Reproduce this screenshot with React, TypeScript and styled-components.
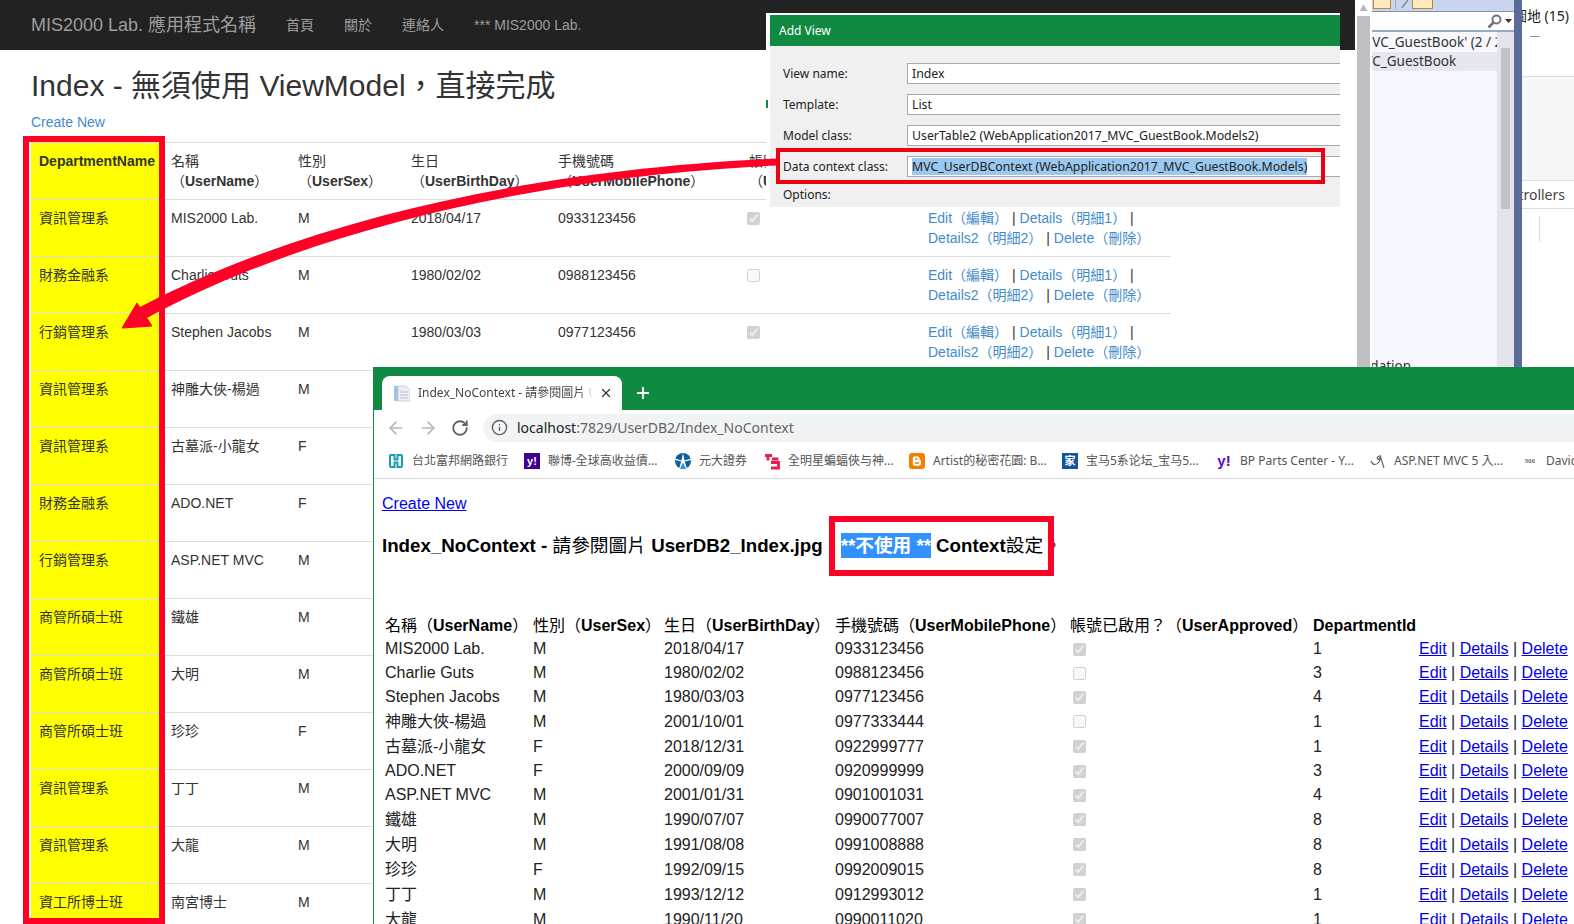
// App.tsx
import React from 'react';
import styled, { createGlobalStyle } from 'styled-components';
import { ArrowLeft, ArrowRight, Info, Plus, RotateCw, X } from 'lucide-react';

const SANS = '"Liberation Sans", "Noto Sans CJK TC", sans-serif';
const UI = '"Noto Sans", "Noto Sans CJK TC", sans-serif';
const GREEN = '#118a41';
const MARK = '#ff0027';

const Global = createGlobalStyle`
    html, body {
        margin: 0;
        padding: 0;
        background: #fff;
    }
    body {
        width: 1574px;
        height: 924px;
        overflow: hidden;
        font-family: ${SANS};
    }
`;

const Page = styled.div`
    position: relative;
    width: 1574px;
    height: 924px;
    overflow: hidden;
    background: #fff;
    color: #333;
    font-size: 14px;
    line-height: 20px;
`;

const Navbar = styled.nav`
    display: flex;
    align-items: center;
    gap: 30px;
    height: 50px;
    width: 1355px;
    padding-left: 31px;
    box-sizing: border-box;
    background: #222;
    color: #9d9d9d;
`;

const Brand = styled.div`
    width: 225px;
    font-size: 18px;
    white-space: nowrap;
`;

const Main = styled.main`
    padding-left: 31px;
`;

const Title = styled.h2`
    margin: 19px 0 10px;
    font-size: 30px;
    line-height: 33px;
    font-weight: 400;
    color: #333;
`;

const Link = styled.a`
    color: #428bca;
`;

const Table = styled.table`
    margin-top: 10px;
    width: 1140px;
    table-layout: fixed;
    border-collapse: collapse;
`;

const Col = styled.col<{ $w: number }>`
    width: ${p => p.$w}px;
`;

const Cell = styled.td<{ $dept?: boolean }>`
    height: 40px;
    padding: 8px;
    vertical-align: top;
    border-top: 1px solid #ddd;
    white-space: nowrap;
    background: ${p => (p.$dept ? '#ff0' : 'transparent')};
`;

const HeadCell = styled(Cell).attrs({ as: 'th' })`
    text-align: left;
    font-weight: 400;
`;

const Latin = styled.b`
    font-weight: 700;
`;

const Check = styled.input.attrs({ type: 'checkbox', disabled: true })`
    display: block;
    margin: 4px 0 0 -2px;
    width: 13px;
    height: 13px;
`;

const RedFrame = styled.div<{ $x: number; $y: number; $w: number; $h: number; $b: number; $c: string }>`
    position: absolute;
    left: ${p => p.$x}px;
    top: ${p => p.$y}px;
    width: ${p => p.$w}px;
    height: ${p => p.$h}px;
    box-sizing: border-box;
    border: ${p => p.$b}px solid ${p => p.$c};
    pointer-events: none;
`;

const ArrowLayer = styled.svg`
    position: absolute;
    left: 0;
    top: 0;
    pointer-events: none;
`;

/* Add View dialog */
const Dialog = styled.section`
    position: absolute;
    left: 766px;
    top: 13px;
    width: 574px;
    height: 194px;
    box-sizing: border-box;
    padding: 2px 0 0 4px;
    background: #fff;
    overflow: hidden;
    font-family: ${UI};
    font-size: 12px;
    color: #222;
`;

const GreenSliver = styled.div`
    position: absolute;
    left: 0;
    top: 87px;
    width: 2px;
    height: 8px;
    background: ${GREEN};
`;

const DialogTitle = styled.div`
    height: 31px;
    line-height: 31px;
    padding-left: 9px;
    background: ${GREEN};
    color: #fff;
`;

const DialogBody = styled.div`
    display: flex;
    flex-direction: column;
    gap: 10px;
    height: 161px;
    box-sizing: border-box;
    padding: 17px 0 0 13px;
    background: #f0f0f0;
`;

const FieldRow = styled.div`
    display: grid;
    grid-template-columns: 124px 1fr;
    align-items: center;
    height: 21px;
    margin-right: -8px;
`;

const FieldBox = styled.div`
    height: 21px;
    box-sizing: border-box;
    padding-left: 4px;
    font-size: 12.3px;
    line-height: 19px;
    background: #fff;
    border: 1px solid #a9a9a9;
    white-space: nowrap;
`;

const Selected = styled.span`
    background: #9ac8ee;
`;

const OptionsLabel = styled.span`
    margin-top: -2px;
`;

/* Visual Studio side panes */
const VsShell = styled.aside`
    position: absolute;
    left: 1355px;
    top: 0;
    width: 219px;
    height: 380px;
    display: flex;
    background: #fff;
    font-family: ${UI};
`;

const OuterScroll = styled.div`
    width: 17px;
    flex-shrink: 0;
    box-sizing: border-box;
    padding: 0 2px;
    display: flex;
    flex-direction: column;
    align-items: stretch;
`;

const ScrollUp = styled.div`
    height: 16px;
    display: flex;
    align-items: center;
    justify-content: center;
    color: #b5b6bb;
    font-size: 8px;
    line-height: 16px;
`;

const OuterThumb = styled.div`
    flex: 1;
    background: #bfc0c4;
`;

const Explorer = styled.div`
    width: 142px;
    flex-shrink: 0;
    display: flex;
    flex-direction: column;
    background: #f6f8fe;
    color: #333;
    font-size: 13.5px;
`;

const VsToolbar = styled.div`
    display: flex;
    align-items: flex-start;
    height: 11px;
    background: #ccd5ee;
`;

const ToolBox = styled.div<{ $w: number }>`
    width: ${p => p.$w}px;
    height: 9px;
    box-sizing: border-box;
    margin-left: 1px;
    background: #ffe9bd;
    border: 1px solid #b08a35;
    border-top: 0;
`;

const ToolSep = styled.div`
    width: 1px;
    height: 9px;
    margin: 0 5px 0 4px;
    background: #9aa6c4;
`;

const SearchRow = styled.div`
    display: flex;
    align-items: center;
    justify-content: flex-end;
    height: 21px;
    box-sizing: border-box;
    padding-right: 2px;
    gap: 3px;
    background: #fff;
    border-top: 1px solid #7f8fb5;
    border-bottom: 2px solid #9aa8c8;
`;

const ExplorerBody = styled.div`
    flex: 1;
    display: flex;
    min-height: 0;
`;

const ExplorerList = styled.div`
    flex: 1;
    min-width: 0;
    overflow: hidden;
    display: flex;
    flex-direction: column;
    padding-top: 1px;
`;

const ExplorerRow = styled.div<{ $active?: boolean; $indent: number }>`
    height: 19px;
    line-height: 19px;
    white-space: nowrap;
    text-indent: ${p => p.$indent}px;
    background: ${p => (p.$active ? '#e6e7ef' : 'transparent')};
`;

const ExplorerFoot = styled(ExplorerRow)`
    margin-top: auto;
    margin-bottom: 4px;
`;

const InnerScroll = styled.div`
    width: 17px;
    flex-shrink: 0;
    box-sizing: border-box;
    padding: 0 4px;
    background: #e4e5ec;
`;

const InnerThumb = styled.div`
    margin-top: 16px;
    height: 161px;
    background: #c2c3c9;
`;

const Strip = styled.div`
    width: 8px;
    flex-shrink: 0;
    background: #5b6a99;
`;

const PropsPane = styled.div`
    flex: 1;
    min-width: 0;
    display: flex;
    flex-direction: column;
    overflow: hidden;
    font-size: 14px;
    color: #444;
`;

const PropsHead = styled.div`
    height: 77px;
    box-sizing: border-box;
    border-bottom: 1px solid #ddd;
    display: flex;
    flex-direction: column;
    align-items: flex-end;
`;

const PropsCount = styled.div`
    height: 31px;
    line-height: 31px;
    padding-right: 5px;
    white-space: nowrap;
    color: #222;
`;

const Dash = styled.div`
    align-self: flex-start;
    margin: 5px 0 0 8px;
    width: 10px;
    height: 1px;
    background: #999;
`;

const PropsGrey = styled.div`
    height: 103px;
    background: #f7f7f7;
`;

const PropsTab = styled.div`
    height: 29px;
    line-height: 27px;
    box-sizing: border-box;
    display: flex;
    justify-content: flex-end;
    padding-right: 9px;
    white-space: nowrap;
    border-top: 1px solid #ddd;
    border-bottom: 1px solid #ddd;
`;

const PropsTick = styled.div`
    margin: 7px 0 0 17px;
    width: 1px;
    height: 26px;
    background: #ddd;
`;

/* Browser window */
const Browser = styled.section`
    position: absolute;
    left: 373px;
    top: 367px;
    right: 0;
    bottom: 0;
    display: flex;
    flex-direction: column;
    overflow: hidden;
    background: #fff;
    border-left: 1px solid ${GREEN};
    color: #000;
`;

const TabStrip = styled.div`
    display: flex;
    align-items: flex-end;
    height: 43px;
    flex-shrink: 0;
    padding-left: 8px;
    background: ${GREEN};
`;

const Tab = styled.div`
    display: flex;
    align-items: center;
    width: 240px;
    height: 34px;
    box-sizing: border-box;
    padding: 0 9px 0 12px;
    background: #fff;
    border-radius: 8px 8px 0 0;
    font-family: ${UI};
    font-size: 12px;
    color: #444;
`;

const TabLabel = styled.div`
    flex: 1;
    margin: 0 5px 0 8px;
    overflow: hidden;
    white-space: nowrap;
    -webkit-mask-image: linear-gradient(90deg, #000 92%, transparent);
`;

const NewTab = styled.div`
    display: flex;
    margin: 0 0 8px 12px;
    color: #fff;
`;

const Toolbar = styled.div`
    display: flex;
    align-items: center;
    height: 35px;
    flex-shrink: 0;
    padding-left: 6px;
    color: #b4b7bb;
`;

const NavIcon = styled.div<{ $dark?: boolean }>`
    display: flex;
    justify-content: center;
    width: 32px;
    color: ${p => (p.$dark ? '#5f6368' : '#b4b7bb')};
`;

const UrlBar = styled.div`
    flex: 1;
    display: flex;
    align-items: center;
    gap: 9px;
    height: 28px;
    margin-left: 7px;
    padding-left: 8px;
    background: #f1f3f4;
    border-radius: 14px 0 0 14px;
    color: #5f6368;
    font-family: ${UI};
    font-size: 14px;
`;

const Host = styled.span`
    color: #202124;
`;

const Bookmarks = styled.div`
    display: flex;
    align-items: center;
    height: 34px;
    flex-shrink: 0;
    box-sizing: border-box;
    padding: 0 0 1px 14px;
    border-bottom: 1px solid #d9dadc;
    font-family: ${UI};
    font-size: 12px;
    color: #555;
`;

const Bookmark = styled.div<{ $w: number }>`
    display: flex;
    align-items: center;
    gap: 8px;
    width: ${p => p.$w}px;
    flex-shrink: 0;
    white-space: nowrap;
`;

const FavBox = styled.span<{ $bg?: string; $color?: string; $size?: number }>`
    display: flex;
    align-items: center;
    justify-content: center;
    width: 16px;
    height: 16px;
    flex-shrink: 0;
    overflow: hidden;
    background: ${p => p.$bg ?? 'transparent'};
    color: ${p => p.$color ?? '#fff'};
    font-family: ${SANS};
    font-size: ${p => p.$size ?? 11}px;
    font-weight: 700;
    line-height: 16px;
`;

const BrowserBody = styled.div`
    padding: 16px 0 0 8px;
    font-size: 16px;
    line-height: 18px;
`;

const PlainLink = styled.a`
    color: #0000ee;
    text-decoration: underline;
`;

const Heading = styled.h3`
    display: flex;
    align-items: center;
    height: 25px;
    margin: 20px 0 57px;
    font-size: 18.72px;
    font-weight: 700;
    white-space: pre;
`;

const Light = styled.span`
    font-weight: 400;
`;

const Highlight = styled.span`
    display: inline-block;
    margin: 0 5px 0 18px;
    height: 25px;
    line-height: 25px;
    background: #3390ff;
    color: #fff;
`;

const UserTable = styled.table`
    margin-left: 1px;
    width: 1210px;
    table-layout: fixed;
    border-collapse: collapse;
`;

const UserHead = styled.th`
    height: 22px;
    padding: 0 2px;
    text-align: left;
    font-weight: 400;
    white-space: nowrap;
`;

const UserRow = styled.tr<{ $cjk: boolean }>`
    height: ${p => (p.$cjk ? 25 : 24)}px;
`;

const UserCell = styled.td`
    padding: 0 2px;
    white-space: nowrap;
    color: #222;
`;

const UserCheck = styled.input.attrs({ type: 'checkbox', disabled: true })`
    display: block;
    margin: 0 0 0 3px;
    width: 13px;
    height: 13px;
`;

type User = {
    dept: string;
    name: string;
    sex: string;
    birth: string;
    phone: string;
    ok: boolean;
    id: number;
    cjk: boolean;
};

const users: User[] = [
    { dept: '資訊管理系', name: 'MIS2000 Lab.', sex: 'M', birth: '2018/04/17', phone: '0933123456', ok: true, id: 1, cjk: false },
    { dept: '財務金融系', name: 'Charlie Guts', sex: 'M', birth: '1980/02/02', phone: '0988123456', ok: false, id: 3, cjk: false },
    { dept: '行銷管理系', name: 'Stephen Jacobs', sex: 'M', birth: '1980/03/03', phone: '0977123456', ok: true, id: 4, cjk: false },
    { dept: '資訊管理系', name: '神雕大俠-楊過', sex: 'M', birth: '2001/10/01', phone: '0977333444', ok: false, id: 1, cjk: true },
    { dept: '資訊管理系', name: '古墓派-小龍女', sex: 'F', birth: '2018/12/31', phone: '0922999777', ok: true, id: 1, cjk: true },
    { dept: '財務金融系', name: 'ADO.NET', sex: 'F', birth: '2000/09/09', phone: '0920999999', ok: true, id: 3, cjk: false },
    { dept: '行銷管理系', name: 'ASP.NET MVC', sex: 'M', birth: '2001/01/31', phone: '0901001031', ok: true, id: 4, cjk: false },
    { dept: '商管所碩士班', name: '鐵雄', sex: 'M', birth: '1990/07/07', phone: '0990077007', ok: true, id: 8, cjk: true },
    { dept: '商管所碩士班', name: '大明', sex: 'M', birth: '1991/08/08', phone: '0991008888', ok: true, id: 8, cjk: true },
    { dept: '商管所碩士班', name: '珍珍', sex: 'F', birth: '1992/09/15', phone: '0992009015', ok: true, id: 8, cjk: true },
    { dept: '資訊管理系', name: '丁丁', sex: 'M', birth: '1993/12/12', phone: '0912993012', ok: true, id: 1, cjk: true },
    { dept: '資訊管理系', name: '大龍', sex: 'M', birth: '1990/11/20', phone: '0990011020', ok: true, id: 1, cjk: true },
];

const FubonIcon = () => (
    <svg width="16" height="16" viewBox="0 0 16 16" fill="none" stroke="#17a0ad" strokeWidth="2">
        <path d="M6.500 2H3Q2 2 2 3V13Q2 14 3 14H6.500V9.500H9.500V14H13Q14 14 14 13V3Q14 2 13 2H9.500V6.500H6.500Z" />
    </svg>
);

const YuantaIcon = () => (
    <svg width="16" height="16" viewBox="0 0 16 16">
        <circle cx="8" cy="8" r="8" fill="#0f5f9e" />
        <path d="M0 5.500 6.500 7.500 8 0 9.500 7.500 16 5.500V7L9.800 8.600 12 16H4L6.200 8.600 0 7z" fill="#fff" />
        <path d="M8 9.500 11 16H5z" fill="#2c93d6" />
    </svg>
);

const StarIcon = () => (
    <svg width="16" height="17" viewBox="0 0 16 17" fill="none" stroke="#ee1c4e" strokeWidth="2.800">
        <path d="M1 2.500H8M4 1V7.500M8 6H14.500M7 9.500H14.500V15H7" />
    </svg>
);

const BloggerIcon = () => (
    <svg width="16" height="16" viewBox="0 0 16 16">
        <rect width="16" height="16" rx="3" fill="#f57d00" />
        <path d="M5.200 3.500H8.500A2.200 2.200 0 0 1 10.700 5.700V6.300A1 1 0 0 0 11.700 7.300A1 1 0 0 1 12 8V10.500A2.200 2.200 0 0 1 9.800 12.700H6A2.200 2.200 0 0 1 3.800 10.500V5A1.500 1.500 0 0 1 5.200 3.500Z" fill="#fff" />
        <path d="M6 6H8.500M6 10H10" stroke="#f57d00" strokeWidth="1.300" />
    </svg>
);

const SpiralIcon = () => (
    <svg width="16" height="16" viewBox="0 0 16 16" fill="none" stroke="#666" strokeWidth="1.200">
        <path d="M1 8C3 13 7 12 9 9 11 6 9 2 7.500 4 6 6 9 7 11 6M10 2 14 15" />
    </svg>
);

const TabDocIcon = () => (
    <svg width="16" height="17" viewBox="0 0 16 17">
        <rect x="0" y="1" width="4" height="15" fill="#9cc4e4" />
        <path d="M4 1H12L16 5V16H4Z" fill="#eceff3" stroke="#c4c8cf" strokeWidth="0.800" />
        <path d="M6 7H14M6 10H14M6 13H14" stroke="#b8bec6" strokeWidth="1" />
    </svg>
);

const SearchIcon = () => (
    <svg width="15" height="15" viewBox="0 0 15 15" fill="none" stroke="#71747c" strokeWidth="2">
        <circle cx="9.500" cy="5.500" r="4" />
        <path d="M6.500 8.500 1.500 13.500" strokeWidth="2.600" />
    </svg>
);

const PencilIcon = () => (
    <svg width="10" height="9" viewBox="0 0 10 9" fill="none" stroke="#7f8794" strokeWidth="1.400">
        <path d="M1 8 3 5 7 0" />
    </svg>
);

const bookmarks: { w: number; label: string; icon: React.ReactNode }[] = [
    { w: 136, label: '台北富邦網路銀行', icon: <FubonIcon /> },
    { w: 151, label: '聯博-全球高收益債...', icon: <FavBox $bg="#400090">y!</FavBox> },
    { w: 89, label: '元大證券', icon: <YuantaIcon /> },
    { w: 145, label: '全明星蝙蝠俠与神...', icon: <StarIcon /> },
    { w: 153, label: 'Artist的秘密花園: B...', icon: <BloggerIcon /> },
    { w: 154, label: '宝马5系论坛_宝马5...', icon: <FavBox $bg="#14549c">家</FavBox> },
    { w: 154, label: 'BP Parts Center - Y...', icon: <FavBox $color="#5f01d1" $size={15}>y!</FavBox> },
    { w: 152, label: 'ASP.NET MVC 5 入...', icon: <SpiralIcon /> },
    { w: 60, label: 'David', icon: <FavBox $color="#666" $size={6}>500</FavBox> },
];

const App: React.FC = () => {
    return (
        <Page lang="zh-Hant">
            <Global />
            <Navbar>
                <Brand>MIS2000 Lab. 應用程式名稱</Brand>
                <span>首頁</span>
                <span>關於</span>
                <span>連絡人</span>
                <span>*** MIS2000 Lab.</span>
            </Navbar>

            <Main>
                <Title>Index - 無須使用 ViewModel，直接完成</Title>
                <Link>Create New</Link>
                <Table>
                    <colgroup>
                        <Col $w={132} />
                        <Col $w={127} />
                        <Col $w={113} />
                        <Col $w={147} />
                        <Col $w={191} />
                        <Col $w={179} />
                        <Col $w={251} />
                    </colgroup>
                    <thead>
                        <tr>
                            <HeadCell $dept><Latin>DepartmentName</Latin></HeadCell>
                            <HeadCell>名稱<br />（<Latin>UserName</Latin>）</HeadCell>
                            <HeadCell>性別<br />（<Latin>UserSex</Latin>）</HeadCell>
                            <HeadCell>生日<br />（<Latin>UserBirthDay</Latin>）</HeadCell>
                            <HeadCell>手機號碼<br />（<Latin>UserMobilePhone</Latin>）</HeadCell>
                            <HeadCell>帳號已啟用？<br />（<Latin>UserApproved</Latin>）</HeadCell>
                            <HeadCell />
                        </tr>
                    </thead>
                    <tbody>
                        {users.map((u, i) => (
                            <tr key={i}>
                                <Cell $dept>{u.dept}</Cell>
                                <Cell>{u.name}</Cell>
                                <Cell>{u.sex}</Cell>
                                <Cell>{u.birth}</Cell>
                                <Cell>{u.phone}</Cell>
                                <Cell><Check defaultChecked={u.ok} /></Cell>
                                <Cell>
                                    <Link>Edit（編輯）</Link> | <Link>Details（明細1）</Link> |<br />
                                    <Link>Details2（明細2）</Link> | <Link>Delete（刪除）</Link>
                                </Cell>
                            </tr>
                        ))}
                        <tr>
                            <Cell $dept>資工所博士班</Cell>
                            <Cell>南宮博士</Cell>
                            <Cell>M</Cell>
                        </tr>
                    </tbody>
                </Table>
            </Main>

            <VsShell>
                <OuterScroll>
                    <ScrollUp>▲</ScrollUp>
                    <OuterThumb />
                </OuterScroll>
                <Explorer>
                    <VsToolbar>
                        <ToolBox $w={18} />
                        <ToolSep />
                        <PencilIcon />
                        <ToolBox $w={21} />
                    </VsToolbar>
                    <SearchRow>
                        <SearchIcon />
                        <svg width="7" height="4" viewBox="0 0 7 4"><path d="M0 0H7L3.500 4Z" fill="#333" /></svg>
                    </SearchRow>
                    <ExplorerBody>
                        <ExplorerList>
                            <ExplorerRow $indent={-12}>MVC_GuestBook' (2 / 2 個專案)</ExplorerRow>
                            <ExplorerRow $indent={-20} $active>MVC_GuestBook</ExplorerRow>
                            <ExplorerFoot $indent={-24}>Validation</ExplorerFoot>
                        </ExplorerList>
                        <InnerScroll>
                            <InnerThumb />
                        </InnerScroll>
                    </ExplorerBody>
                </Explorer>
                <Strip />
                <PropsPane>
                    <PropsHead>
                        <PropsCount>圖地 (15)</PropsCount>
                        <Dash />
                    </PropsHead>
                    <PropsGrey />
                    <PropsTab>Controllers</PropsTab>
                    <PropsTick />
                </PropsPane>
            </VsShell>

            <Dialog>
                <GreenSliver />
                <DialogTitle>Add View</DialogTitle>
                <DialogBody>
                    <FieldRow><span>View name:</span><FieldBox>Index</FieldBox></FieldRow>
                    <FieldRow><span>Template:</span><FieldBox>List</FieldBox></FieldRow>
                    <FieldRow><span>Model class:</span><FieldBox>UserTable2 (WebApplication2017_MVC_GuestBook.Models2)</FieldBox></FieldRow>
                    <FieldRow>
                        <span>Data context class:</span>
                        <FieldBox><Selected>MVC_UserDBContext (WebApplication2017_MVC_GuestBook.Models)</Selected></FieldBox>
                    </FieldRow>
                    <OptionsLabel>Options:</OptionsLabel>
                </DialogBody>
            </Dialog>

            <Browser>
                <TabStrip>
                    <Tab>
                        <TabDocIcon />
                        <TabLabel>Index_NoContext - 請參閱圖片 UserDB2_Index.jpg</TabLabel>
                        <X size={14} strokeWidth={2.2} color="#333" />
                    </Tab>
                    <NewTab><Plus size={18} strokeWidth={2.4} /></NewTab>
                </TabStrip>
                <Toolbar>
                    <NavIcon><ArrowLeft size={20} /></NavIcon>
                    <NavIcon><ArrowRight size={20} /></NavIcon>
                    <NavIcon $dark><RotateCw size={18} strokeWidth={2.4} /></NavIcon>
                    <UrlBar>
                        <Info size={17} />
                        <span><Host>localhost</Host>:7829/UserDB2/Index_NoContext</span>
                    </UrlBar>
                </Toolbar>
                <Bookmarks>
                    {bookmarks.map(b => (
                        <Bookmark key={b.label} $w={b.w}>
                            {b.icon}
                            <span>{b.label}</span>
                        </Bookmark>
                    ))}
                </Bookmarks>
                <BrowserBody>
                    <PlainLink>Create New</PlainLink>
                    <Heading>
                        {'Index_NoContext - '}<Light>請參閱圖片</Light>{' UserDB2_Index.jpg'}
                        <Highlight>**不使用 **</Highlight>
                        Context<Light>設定。</Light>
                    </Heading>
                    <UserTable>
                        <colgroup>
                            <Col $w={148} />
                            <Col $w={131} />
                            <Col $w={171} />
                            <Col $w={235} />
                            <Col $w={243} />
                            <Col $w={106} />
                            <Col $w={176} />
                        </colgroup>
                        <thead>
                            <tr>
                                <UserHead>名稱（<Latin>UserName</Latin>）</UserHead>
                                <UserHead>性別（<Latin>UserSex</Latin>）</UserHead>
                                <UserHead>生日（<Latin>UserBirthDay</Latin>）</UserHead>
                                <UserHead>手機號碼（<Latin>UserMobilePhone</Latin>）</UserHead>
                                <UserHead>帳號已啟用？（<Latin>UserApproved</Latin>）</UserHead>
                                <UserHead><Latin>DepartmentId</Latin></UserHead>
                                <UserHead />
                            </tr>
                        </thead>
                        <tbody>
                            {users.map((u, i) => (
                                <UserRow key={i} $cjk={u.cjk}>
                                    <UserCell>{u.name}</UserCell>
                                    <UserCell>{u.sex}</UserCell>
                                    <UserCell>{u.birth}</UserCell>
                                    <UserCell>{u.phone}</UserCell>
                                    <UserCell><UserCheck defaultChecked={u.ok} /></UserCell>
                                    <UserCell>{u.id}</UserCell>
                                    <UserCell>
                                        <PlainLink>Edit</PlainLink> | <PlainLink>Details</PlainLink> | <PlainLink>Delete</PlainLink>
                                    </UserCell>
                                </UserRow>
                            ))}
                        </tbody>
                    </UserTable>
                </BrowserBody>
            </Browser>

            <ArrowLayer width="1574" height="924" viewBox="0 0 1574 924">
                <path d="M778 158.500C600 166 345 200 138 308L145 319C345 211 600 173 778 165.500Z" fill={MARK} />
                <path d="M122 328 137 303 152 326Z" fill={MARK} stroke={MARK} strokeWidth="1" />
            </ArrowLayer>
            <RedFrame $x={23} $y={136} $w={142} $h={788} $b={6} $c={MARK} />
            <RedFrame $x={776} $y={148} $w={549} $h={36} $b={4} $c="#ee0010" />
            <RedFrame $x={829} $y={516} $w={225} $h={60} $b={6} $c={MARK} />
        </Page>
    );
};

export default App;
